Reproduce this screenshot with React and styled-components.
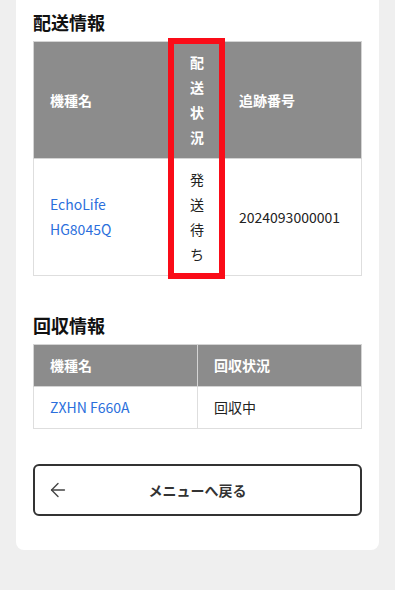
import React from "react";
import styled, { createGlobalStyle } from "styled-components";
import { ArrowLeft } from "lucide-react";

const GlobalStyle = createGlobalStyle`
    body {
        margin: 0;
        background: #efefef;
        font-family: "Noto Sans CJK JP", "Noto Sans", sans-serif;
        color: #222;
    }
`;

const Page = styled.div`
    min-height: 590px;
    padding: 0 16px;
`;
const Card = styled.div`
    background: #fff;
    border-radius: 0 0 8px 8px;
    padding: 9px 17px 34px 17px;
`;
const Section = styled.section`
    margin-bottom: ${(p) => p.$gap || 34}px;
`;
const Title = styled.h2`
    margin: 0 0 5px;
    font-size: 18px;
    line-height: 27px;
    font-weight: 700;
    color: #111;
`;
const TableWrap = styled.div`
    position: relative;
`;
const Table = styled.table`
    width: 100%;
    border-collapse: collapse;
    table-layout: fixed;
    font-size: 14px;
    line-height: 25px;
`;
const Th = styled.th`
    background: #8c8c8c;
    color: #fff;
    font-weight: 700;
    text-align: ${(p) => (p.$center ? "center" : "left")};
    padding: 8px 16px;
    border: 1px solid #d4d4d4;
    vertical-align: middle;
`;
const Td = styled.td`
    padding: 8px 16px;
    border: 1px solid #dedede;
    text-align: ${(p) => (p.$center ? "center" : "left")};
    vertical-align: middle;
    color: #222;
`;
const ModelLink = styled.a`
    color: #2b6fdc;
    text-decoration: none;
`;
const Highlight = styled.div`
    position: absolute;
    top: -3px;
    bottom: -3px;
    left: ${(p) => p.$left}px;
    width: ${(p) => p.$width}px;
    border: 6px solid #fa0c18;
    box-sizing: border-box;
    pointer-events: none;
`;
const BackButton = styled.button`
    display: grid;
    grid-template-columns: 22px 1fr 22px;
    align-items: center;
    width: 100%;
    height: 52px;
    padding: 0 12px;
    box-sizing: border-box;
    background: #fff;
    border: 2px solid #333;
    border-radius: 6px;
    font-family: inherit;
    font-size: 14px;
    font-weight: 700;
    color: #333;
    cursor: pointer;
`;
const Label = styled.span`
    text-align: center;
`;

export default function App() {
    return (
        <Page>
            <GlobalStyle />
            <Card>
                <Section $gap={36}>
                    <Title>配送情報</Title>
                    <TableWrap>
                        <Table>
                            <colgroup>
                                <col style={{ width: "138px" }} />
                                <col style={{ width: "51px" }} />
                                <col />
                            </colgroup>
                            <thead>
                                <tr>
                                    <Th>機種名</Th>
                                    <Th $center>配送状況</Th>
                                    <Th>追跡番号</Th>
                                </tr>
                            </thead>
                            <tbody>
                                <tr>
                                    <Td><ModelLink href="#">EchoLife HG8045Q</ModelLink></Td>
                                    <Td $center>発送待ち</Td>
                                    <Td>2024093000001</Td>
                                </tr>
                            </tbody>
                        </Table>
                        <Highlight $left={135} $width={57} />
                    </TableWrap>
                </Section>
                <Section $gap={35}>
                    <Title>回収情報</Title>
                    <Table>
                        <thead>
                            <tr>
                                <Th>機種名</Th>
                                <Th>回収状況</Th>
                            </tr>
                        </thead>
                        <tbody>
                            <tr>
                                <Td><ModelLink href="#">ZXHN F660A</ModelLink></Td>
                                <Td>回収中</Td>
                            </tr>
                        </tbody>
                    </Table>
                </Section>
                <BackButton>
                    <ArrowLeft size={22} strokeWidth={1.5} color="#444" />
                    <Label>メニューへ戻る</Label>
                    <span />
                </BackButton>
            </Card>
        </Page>
    );
}
